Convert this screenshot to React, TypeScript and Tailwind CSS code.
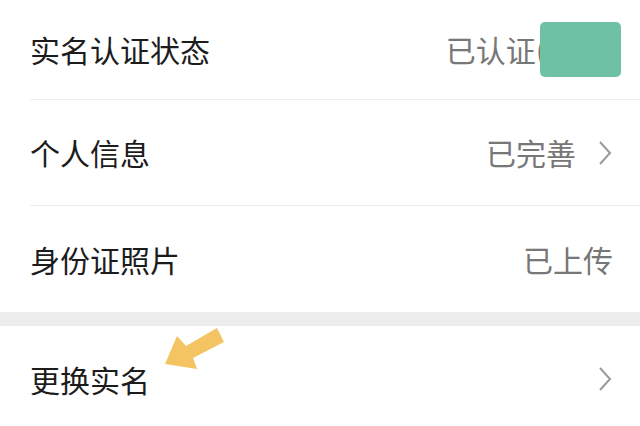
import React from "react";

function Chevron() {
  return (
    <svg width="14" height="26" viewBox="0 0 14 26" className="shrink-0">
      <path d="M2 2 L12 13 L2 24" fill="none" stroke="#9a9a9a" strokeWidth="2" />
    </svg>
  );
}

export default function App() {
  return (
    <div
      className="relative w-[640px] h-[426px] overflow-hidden bg-white"
      style={{ fontFamily: '"Noto Sans CJK SC", "Noto Sans", sans-serif' }}
    >
      {/* 实名认证状态 */}
      <div className="pl-[30px]">
        <div className="flex items-center justify-between h-[100px] pr-[19px] border-b border-[#ededed]">
          <span className="text-[30px] text-[#1c1c1c]">实名认证状态</span>
          <div className="flex items-center">
            <span className="text-[30px] text-[#777777]">已认证(</span>
            <span className="ml-[-6px] w-[81px] h-[55px] rounded-[5px] bg-[#6fc1a6]" />
          </div>
        </div>
      </div>

      <div className="pl-[30px]">
        <div className="flex items-center justify-between h-[106px] pr-[28px] border-b border-[#ededed]">
          <span className="text-[30px] text-[#1c1c1c]">个人信息</span>
          <div className="flex items-center gap-[22px]">
            <span className="text-[30px] text-[#777777]">已完善</span>
            <Chevron />
          </div>
        </div>
      </div>

      <div className="flex items-center justify-between h-[106px] pl-[30px] pr-[27px]">
        <span className="text-[30px] text-[#1c1c1c]">身份证照片</span>
        <span className="text-[30px] text-[#777777]">已上传</span>
      </div>

      <div className="h-[14px] bg-[#ededed]" />

      <div className="flex items-center justify-between h-[106px] pl-[30px] pr-[28px]">
        <span className="text-[30px] text-[#1c1c1c]">更换实名</span>
        <Chevron />
      </div>

      <svg
        className="absolute left-0 top-0 pointer-events-none"
        width="640"
        height="426"
        viewBox="0 0 640 426"
      >
        <polygon
          points="165,364 177,336 186,346 217,328 224,342 193,358 197,369"
          fill="#f4c462"
        />
      </svg>
    </div>
  );
}
